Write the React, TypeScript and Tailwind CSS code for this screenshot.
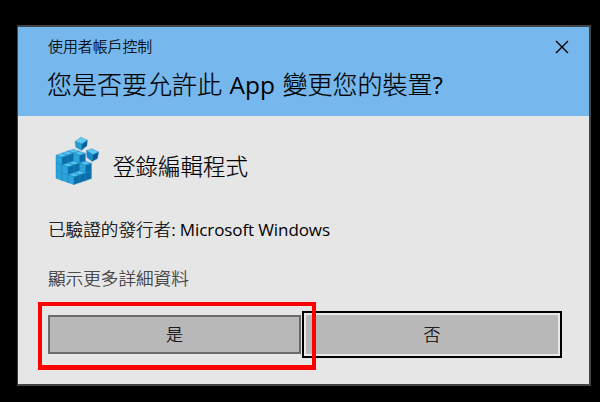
import React from "react";

// Stacked columns of the registry block: [row towards the viewer, column to the right, height]
const columns = [
  [0, 2, 3], [0, 1, 3], [0, 0, 3],
  [1, 2, 3], [1, 1, 2], [1, 0, 2],
  [2, 2, 2], [2, 1, 1], [2, 0, 1],
];

const Cube = ({ x, y }: { x: number; y: number }) => (
  <g transform={`translate(${x} ${y})`} stroke="#1a88c0" strokeWidth=".45" strokeLinejoin="round">
    <path d="M0 0 5.8-2 11.8.1 6 2.1Z" fill="#52c3ef" />
    <path d="M0 0 6 2.1V9.8L0 7.7Z" fill="#2ba4da" />
    <path d="M11.8.1 6 2.1V9.8L11.8 7.8Z" fill="#0b6eab" />
  </g>
);

const RegistryIcon = () => (
  <svg className="h-[50px] w-[46px] shrink-0" viewBox="0 0 46 50">
    {columns.map(([a, b, h]) =>
      Array.from({ length: h }, (_, k) => (
        <Cube key={`${a}${b}${k}`} x={2 + a * 6 + b * 5.8} y={35.6 + a * 2.1 - b * 2 - k * 7.7} />
      ))
    )}
    <g strokeLinejoin="round" stroke="#1980b8" strokeWidth=".4">
      <path d="M21 6.5 27 2.3 33.4 5.2 28 9Z" fill="#62cdf3" />
      <path d="M21 6.5 28 9 27.4 15.3 21.8 12.2Z" fill="#249bd2" />
      <path d="M33.4 5.2 28 9 27.4 15.3 32.8 11Z" fill="#075f99" />
      <path d="M32.5 15.5 38 13.8 44.6 17 39 19.8Z" fill="#5acaf1" />
      <path d="M32.5 15.5 39 19.8 38.2 26.4 33 22.6Z" fill="#168bc8" />
      <path d="M44.6 17 39 19.8 38.2 26.4 43.4 23.6Z" fill="#075b94" />
    </g>
  </svg>
);

export default function App() {
  return (
    <main className="relative h-[402px] w-[600px] overflow-hidden bg-black pl-[17px] pt-[25px] font-['Open_Sans','Noto_Sans_CJK_TC',sans-serif] text-black">
      <section className="h-[361px] w-[574px] border-2 border-l border-[#414345] bg-[#e6e6e6]">
        <header className="h-[89px] bg-[#76b8ed] pl-[30px] pr-5">
          <div className="flex h-[38px] items-center justify-between">
            <span className="text-[14.9px] font-light leading-5 [-webkit-text-stroke:0.2px]">使用者帳戶控制</span>
            <button aria-label="關閉" className="pt-[2px]">
              <svg className="h-[14px] w-[14px]" viewBox="0 0 14 14" stroke="#000" strokeWidth="1.4">
                <path d="M1 1 13 13M13 1 1 13" />
              </svg>
            </button>
          </div>
          <h1 className="-ml-px whitespace-nowrap text-[25px] font-light leading-[38px] [-webkit-text-stroke:0.2px] [word-spacing:1px]">
            您是否要允許此 <span className="text-[24.5px] font-normal [-webkit-text-stroke:0px]">App</span> 變更您的裝置<span className="text-[24px] font-normal [-webkit-text-stroke:0px]">?</span>
          </h1>
        </header>
        <div className="px-[30px]">
          <div className="flex h-[88px] items-center gap-[13px] pl-[6px]">
            <RegistryIcon />
            <h2 className="pt-[14px] text-[22.5px] font-light [-webkit-text-stroke:0.2px]">登錄編輯程式</h2>
          </div>
          <p className="h-12 whitespace-nowrap text-[17.6px] font-light leading-[51px] [-webkit-text-stroke:0.2px]">
            已驗證的發行者<span className="text-[17px] font-normal tracking-[-0.1px] [-webkit-text-stroke:0px]">: Microsoft Windows</span>
          </p>
          <p className="h-[59px] whitespace-nowrap text-[17.6px] font-light leading-[52px] text-[#333] [-webkit-text-stroke:0.2px]">顯示更多詳細資料</p>
          <div className="flex items-center gap-px">
            <button className="h-[39px] w-[253px] shrink-0 border-2 border-[#6b6b6b] bg-[#b8b8b8] text-[17px] font-light [-webkit-text-stroke:0.2px]">是</button>
            <button className="h-[47px] w-[260px] shrink-0 border-2 border-black bg-[#e8e8e8] p-[2px] text-[17px] font-light [-webkit-text-stroke:0.2px]">
              <span className="flex h-full items-center justify-center bg-[#b8b8b8]">否</span>
            </button>
          </div>
        </div>
      </section>
      <div className="absolute left-[38px] top-[302px] h-[68px] w-[278px] border-4 border-b-[5px] border-[#ff0000]" />
    </main>
  );
}
